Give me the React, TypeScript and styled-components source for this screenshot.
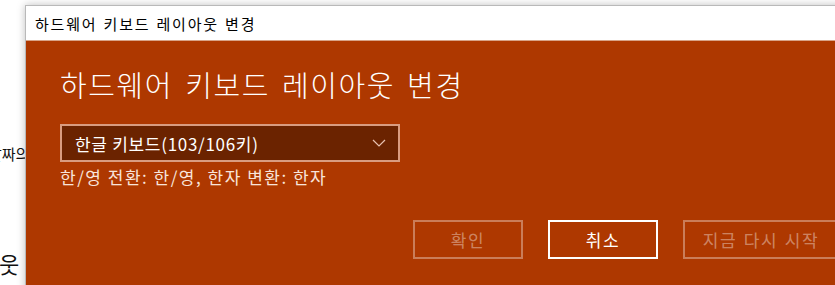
import React from "react";
import styled, { createGlobalStyle } from "styled-components";

const Global = createGlobalStyle`
  html, body { margin: 0; padding: 0; background: #ffffff; }
  body { font-family: "Noto Sans CJK KR", "Noto Sans", sans-serif; }
`;

const Desktop = styled.div`
  position: relative;
  width: 835px;
  height: 285px;
  overflow: hidden;
  background: #ffffff;
`;

const BehindText = styled.span<{ $left: number; $top: number; $size: number }>`
  position: absolute;
  left: ${(p) => p.$left}px;
  top: ${(p) => p.$top}px;
  font-size: ${(p) => p.$size}px;
  line-height: 1;
  color: #111;
  white-space: nowrap;
`;

const Window = styled.div`
  position: absolute;
  left: 25px;
  top: 5px;
  width: 860px;
  height: 300px;
  display: flex;
  flex-direction: column;
  border: 1px solid #b9b9b9;
  box-shadow: 0 0 8px rgba(0, 0, 0, 0.25);
  background: #ae3800;
`;

const TitleBar = styled.div`
  height: 35px;
  flex: none;
  background: #ffffff;
  display: flex;
  align-items: center;
  padding-left: 9px;
  font-size: 15px;
  letter-spacing: 1.8px;
  word-spacing: 1px;
  color: #000;
  border-bottom: 1px solid #d8a488;
  box-sizing: border-box;
`;

const Body = styled.div`
  flex: 1;
  display: flex;
  flex-direction: column;
  padding: 25px 0 0 34px;
  color: #fff;
`;

const Heading = styled.h1`
  margin: 0;
  font-size: 29px;
  font-weight: 300;
  line-height: 36px;
  letter-spacing: 1.6px;
  word-spacing: 4px;
  color: #fff;
`;

const Select = styled.div`
  margin-top: 22px;
  width: 340px;
  height: 38px;
  box-sizing: border-box;
  border: 2px solid #d99c80;
  background: #6b2300;
  display: flex;
  align-items: center;
  justify-content: space-between;
  padding: 0 12px 0 13px;
  font-size: 17px;
  letter-spacing: 0.7px;
  color: #fff;
`;

const Chevron = styled.svg`
  width: 14px;
  height: 8px;
  flex: none;
`;

const Hint = styled.div`
  margin-top: 4px;
  font-size: 17px;
  line-height: 22px;
  letter-spacing: 1.5px;
  color: #f8e4da;
`;

const ButtonRow = styled.div`
  margin-top: 32px;
  display: flex;
  gap: 25px;
  padding-left: 353px;
`;

const Button = styled.button<{ $variant: "disabled" | "primary"; $w: number }>`
  width: ${(p) => p.$w}px;
  height: 39px;
  box-sizing: border-box;
  background: transparent;
  font-family: inherit;
  font-size: 17px;
  letter-spacing: 1.6px;
  word-spacing: 1px;
  padding: 0;
  border: 2px solid
    ${(p) => (p.$variant === "primary" ? "#ffffff" : "rgba(255,255,255,0.35)")};
  color: ${(p) => (p.$variant === "primary" ? "#ffffff" : "rgba(255,255,255,0.4)")};
  cursor: default;
`;

export default function App() {
  return (
    <>
      <Global />
      <Desktop>
        <BehindText $left={-12} $top={146} $size={15}>날짜의</BehindText>
        <BehindText $left={-1} $top={252} $size={22}>웃</BehindText>
        <Window>
          <TitleBar>하드웨어 키보드 레이아웃 변경</TitleBar>
          <Body>
            <Heading>하드웨어 키보드 레이아웃 변경</Heading>
            <Select>
              <span>한글 키보드(103/106키)</span>
              <Chevron viewBox="0 0 14 8">
                <path d="M1 1 L7 7 L13 1" fill="none" stroke="#e8c2b0" strokeWidth="1.2" />
              </Chevron>
            </Select>
            <Hint>한/영 전환: 한/영, 한자 변환: 한자</Hint>
            <ButtonRow>
              <Button $variant="disabled" $w={110}>확인</Button>
              <Button $variant="primary" $w={110}>취소</Button>
              <Button $variant="disabled" $w={156}>지금 다시 시작</Button>
            </ButtonRow>
          </Body>
        </Window>
      </Desktop>
    </>
  );
}
